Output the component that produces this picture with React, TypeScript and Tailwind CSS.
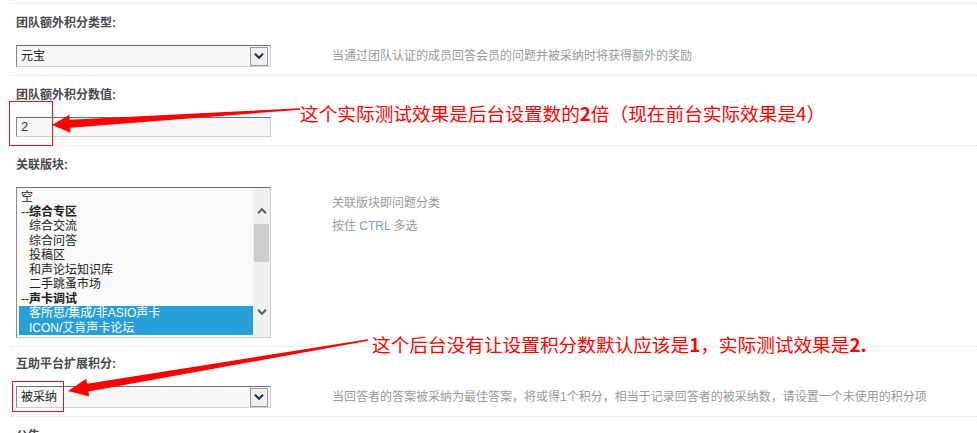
import React from "react";

const boards: { text: string; kind: "plain" | "group" | "child"; selected?: boolean }[] = [
  { text: "空", kind: "plain" },
  { text: "综合专区", kind: "group" },
  { text: "综合交流", kind: "child" },
  { text: "综合问答", kind: "child" },
  { text: "投稿区", kind: "child" },
  { text: "和声论坛知识库", kind: "child" },
  { text: "二手跳蚤市场", kind: "child" },
  { text: "声卡调试", kind: "group" },
  { text: "客所思/集成/非ASIO声卡", kind: "child", selected: true },
  { text: "ICON/艾肯声卡论坛", kind: "child", selected: true },
];

function Chevron({ up = false, color = "#1b2b4b" }: { up?: boolean; color?: string }) {
  return (
    <svg width="10" height="6" viewBox="0 0 10 6" className="block">
      <path
        d={up ? "M1 5.2 L5 1.2 L9 5.2" : "M1 0.8 L5 4.8 L9 0.8"}
        fill="none"
        stroke={color}
        strokeWidth="2"
      />
    </svg>
  );
}

function FakeSelect({ value }: { value: string }) {
  return (
    <div className="flex h-[22px] w-[255px] items-center justify-between border border-t-[#6e6e6e] border-l-[#8a8a8a] border-r-[#cfcfcf] border-b-[#cfcfcf] bg-[#f7f7f7] pl-[4px] pr-[2px]">
      <span className="text-[12px] text-[#222]">{value}</span>
      <span className="flex h-[19px] w-[18px] items-center justify-center border border-[#9a9a9a] bg-[#efefef]">
        <Chevron />
      </span>
    </div>
  );
}

function Row({
  label,
  children,
  top = "pt-[9px]",
}: {
  label: string;
  children: React.ReactNode;
  top?: string;
}) {
  return (
    <div className={`border-b border-dotted border-[#dbe5ea] pb-[8px] pl-[5px] ${top}`}>
      <div className="h-[20px] text-[12px] font-bold leading-[20px] text-[#4a4a4a]">{label}</div>
      <div className="mt-[12px] flex">{children}</div>
    </div>
  );
}

export default function App() {
  return (
    <div className="relative h-[433px] w-full overflow-hidden bg-white font-['Liberation_Sans','Noto_Sans_CJK_SC',sans-serif]">
      <div className="ml-[11px] mt-[3px] border-t border-dotted border-[#dbe5ea]">
        <Row label="团队额外积分类型:">
          <FakeSelect value="元宝" />
          <p className="ml-[61px] self-center text-[12px] text-[#999]">
            当通过团队认证的成员回答会员的问题并被采纳时将获得额外的奖励
          </p>
        </Row>

        <Row label="团队额外积分数值:">
          <div className="relative">
            <div className="flex h-[20px] w-[255px] items-center border border-t-[#6e6e6e] border-l-[#8a8a8a] border-r-[#cfcfcf] border-b-[#cfcfcf] bg-[#f7f7f7] pl-[4px] text-[13px] text-[#2a3550]">
              2
            </div>
            <div className="absolute left-[-7px] top-[-16px] h-[45px] w-[44px] border border-[#e81515]" />
          </div>
        </Row>

        <Row label="关联版块:">
          <div className="flex h-[151px] w-[255px] overflow-hidden border border-t-[#6e6e6e] border-l-[#8a8a8a] border-r-[#cfcfcf] border-b-[#cfcfcf] bg-[#f9f9f9]">
            <ul className="flex-1 overflow-hidden pl-[2px] pt-[2px] text-[12px] leading-[14.5px] text-[#222]">
              {boards.map((b) => (
                <li
                  key={b.text}
                  className={`h-[14.5px] whitespace-nowrap pl-[2px] ${b.selected ? "bg-[#279fd9] text-white" : ""}`}
                >
                  {b.kind === "group" ? (
                    <>
                      --<span className="font-bold">{b.text}</span>
                    </>
                  ) : b.kind === "child" ? (
                    <span className="pl-[8px]">{b.text}</span>
                  ) : (
                    b.text
                  )}
                </li>
              ))}
            </ul>
            <div className="flex w-[17px] flex-col bg-[#f0f0f0]">
              <div className="flex h-[36px] items-end justify-center pb-[10px]">
                <Chevron up color="#606060" />
              </div>
              <div className="mx-[1px] h-[38px] bg-[#cdcdcd]" />
              <div className="flex-1" />
              <div className="flex h-[36px] items-start justify-center pt-[8px]">
                <Chevron color="#606060" />
              </div>
            </div>
          </div>
          <div className="ml-[61px] mt-[5px] text-[12px] leading-[23px] text-[#999]">
            <p>关联版块即问题分类</p>
            <p>
              按住 <span className="text-[#7f9cba]">CTRL</span> 多选
            </p>
          </div>
        </Row>

        <Row label="互助平台扩展积分:" top="pt-[7px]">
          <div className="relative">
            <FakeSelect value="被采纳" />
            <div className="absolute left-[-4px] top-[-5px] h-[31px] w-[52px] border border-[#e81515]" />
          </div>
          <p className="ml-[61px] self-center text-[12px] text-[#999]">
            当回答者的答案被采纳为最佳答案，将或得1个积分，相当于记录回答者的被采纳数，请设置一个未使用的积分项
          </p>
        </Row>

        <Row label="公告:">
          <div className="h-[22px]" />
        </Row>
      </div>

      {/* annotations */}
      <p className="absolute left-[300px] top-[103px] whitespace-nowrap font-['Noto_Sans_CJK_SC',sans-serif] text-[18.67px] leading-[20px] text-[#ff0000]">
        这个实际测试效果是后台设置数的<span className="font-bold">2</span>倍（现在前台实际效果是4）
      </p>
      <p className="absolute left-[372px] top-[334px] whitespace-nowrap font-['Noto_Sans_CJK_SC',sans-serif] text-[18.67px] leading-[20px] text-[#ff0000]">
        这个后台没有让设置积分数默认应该是<span className="font-bold">1</span>，实际测试效果是<span className="font-bold">2.</span>
      </p>

      <svg className="pointer-events-none absolute inset-0" width="977" height="433" viewBox="0 0 977 433">
        <polygon
          points="52,125 69.4,114.8 69.7,119.8 300,108.3 300,109.7 70.3,127.8 70.6,132.8"
          fill="#ff0000"
        />
        <polygon
          points="68,391 86.2,378.7 87,383.7 367.9,339.3 368.1,340.7 88.4,391.5 89.2,396.5"
          fill="#ff0000"
        />
      </svg>
    </div>
  );
}
